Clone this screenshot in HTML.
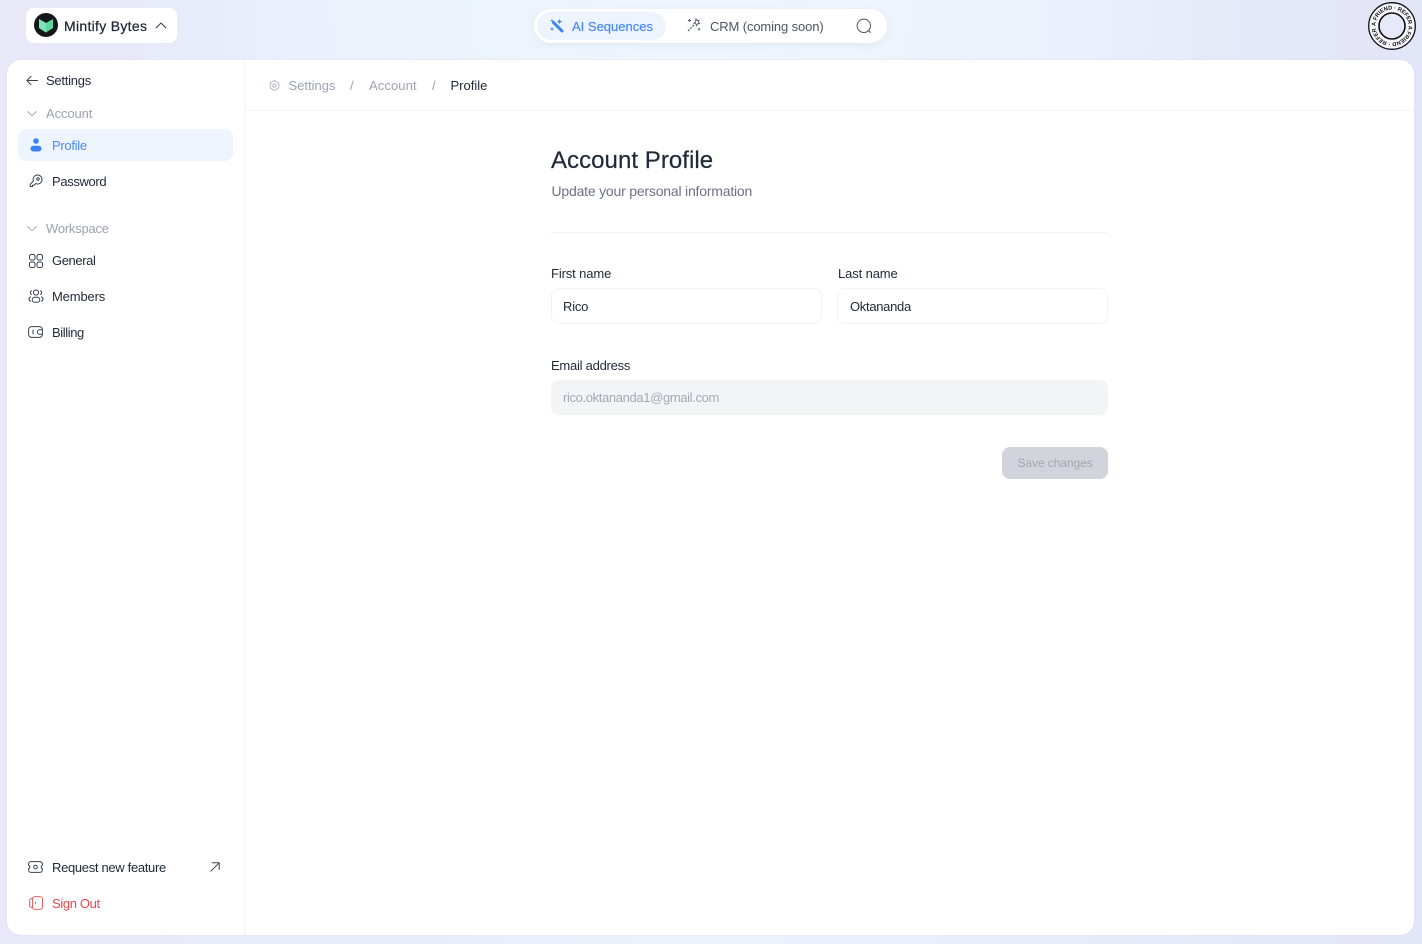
<!DOCTYPE html>
<html><head><meta charset="utf-8"><title>Account Profile</title>
<style>
html,body{margin:0;padding:0}
body{width:1422px;height:944px;position:relative;overflow:hidden;font-family:"Liberation Sans",sans-serif;color:#1f2937;
background:radial-gradient(ellipse 560px 500px at 690px 0,#eef5fd 0,rgba(238,245,253,.6) 60%,rgba(238,245,253,0) 100%),linear-gradient(90deg,#e8e8f9 0,#e7eefa 30%,#edf3fc 50%,#e6ecfa 75%,#e3e5f8 100%)}
.t{position:absolute;white-space:nowrap;font-size:13px;line-height:16px;color:#1f2937}
.g{color:#9ca3af}
.b{position:absolute;box-sizing:border-box}
svg{position:absolute;overflow:visible}
.s{fill:none;stroke:#374151;stroke-width:1;stroke-linecap:round;stroke-linejoin:round}
</style></head><body>

<!-- workspace chip -->
<div class="b" style="left:26px;top:8px;width:151px;height:35px;background:#fff;border-radius:8px"></div>
<svg style="left:34px;top:13px" width="24" height="24" viewBox="0 0 24 24"><circle cx="12" cy="12" r="12" fill="#14181a"/><path d="M5 6l7 4 7-4v9l-7 4.500L5 15z" fill="#5fd6a0"/><path d="M12 10v9.500L5 15V6z" fill="#7ce3b4"/></svg>
<div class="t" style="left:64px;top:18px;font-size:14px;letter-spacing:.3px;-webkit-text-stroke:.25px #1f2937">Mintify Bytes</div>
<svg style="left:155px;top:22px" width="12" height="7" viewBox="0 0 12 7"><path class="s" d="M1 6L6 1l5 5"/></svg>

<!-- top nav -->
<div class="b" style="left:534px;top:9px;width:353px;height:34px;background:#fff;border-radius:17px;box-shadow:0 2px 8px rgba(120,140,190,.10)"></div>
<div class="b" style="left:537px;top:12px;width:129px;height:28px;background:#edf4fe;border-radius:14px"></div>
<svg style="left:549px;top:18px" width="16" height="16" viewBox="0 0 16 16"><path d="M4.500 4.500L13 13" stroke="#3b82f6" stroke-width="3" stroke-linecap="round"/><path d="M10.500 .8l.8 2 2 .8-2 .8-.8 2-.8-2-2-.8 2-.8zM3 9l.6 1.400 1.400.6-1.400.6L3 13l-.6-1.400L1 11l1.400-.6zM3 .8l.5 1.200 1.200.5-1.200.5L3 4.200 2.500 3l-1.200-.5L2.500 2z" fill="#3b82f6"/></svg>
<div class="t" style="left:572px;top:19px;color:#4b8bf5;-webkit-text-stroke:.2px #4b8bf5">AI Sequences</div>
<svg style="left:687px;top:18px" width="14" height="14" viewBox="0 0 14 14"><path d="M1 13L7 7" stroke="#4b5563" stroke-width="1.200" stroke-dasharray="2 1.200"/><path d="M9 1l1 1.500 2-.2-.6 1.800 1.200 1.500-2 .2-1 1.700-.8-1.800-1.900-.5 1.500-1.200z" fill="none" stroke="#4b5563" stroke-width=".9"/><path d="M2.500 1v3M1 2.500h3M12 10v2.500M10.800 11.200h2.400" stroke="#4b5563" stroke-width=".9"/></svg>
<div class="t" style="left:710px;top:19px;color:#4b5563;letter-spacing:-.12px">CRM (coming soon)</div>
<svg style="left:856px;top:18px" width="16" height="16" viewBox="0 0 16 16"><circle cx="7.800" cy="7.800" r="6.700" class="s" style="stroke:#4b5563"/><path class="s" style="stroke:#4b5563" d="M12.500 12.500l2 2"/></svg>

<!-- refer badge -->
<svg style="left:1368px;top:2px" width="48" height="48" viewBox="0 0 48 48">
<circle cx="24" cy="24" r="23.300" fill="#f6f6fc" stroke="#111" stroke-width="1.300"/>
<circle cx="24" cy="24" r="13" fill="#e6e9fa" stroke="#111" stroke-width="1.600"/>
<defs><path id="c" d="M24 24m-16.500 0a16.500 16.500 0 1 1 33 0a16.500 16.500 0 1 1-33 0"/></defs>
<text font-family="Liberation Sans,sans-serif" font-size="5.600" font-weight="700" fill="#111" textLength="101" lengthAdjust="spacing"><textPath href="#c" textLength="101" lengthAdjust="spacing">A FRIEND · REFER A FRIEND · REFER </textPath></text>
</svg>

<!-- main card -->
<div class="b" style="left:7px;top:60px;width:1407px;height:875px;background:#fff;border-radius:14px;box-shadow:0 0 2px rgba(140,150,190,.12)"></div>
<div class="b" style="left:244px;top:60px;width:1px;height:875px;background:#f3f4f6"></div>
<div class="b" style="left:245px;top:110px;width:1169px;height:1px;background:#f3f4f6"></div>

<!-- sidebar -->
<svg style="left:26px;top:75px" width="12" height="11" viewBox="0 0 12 11"><path class="s" d="M11.500 5.500H.8M5 1.300L.8 5.500 5 9.700"/></svg>
<div class="t" style="left:46px;top:73px;letter-spacing:-.25px">Settings</div>
<svg style="left:27px;top:111px" width="10" height="5" viewBox="0 0 10 5"><path class="s" style="stroke:#a7adb8" d="M.5.500L5 4.800 9.500.500"/></svg>
<div class="t g" style="left:46px;top:106px;letter-spacing:-.1px">Account</div>
<div class="b" style="left:18px;top:129px;width:215px;height:32px;background:#edf4fe;border-radius:8px"></div>
<svg style="left:30px;top:138px" width="12" height="14" viewBox="0 0 12 14"><circle cx="6" cy="3" r="2.800" fill="#3b82f6"/><rect x=".5" y="7.700" width="11" height="5.800" rx="2.900" fill="#3b82f6"/></svg>
<div class="t" style="left:52px;top:138px;color:#4b8bf5;letter-spacing:-.3px">Profile</div>
<svg style="left:29px;top:174px" width="14" height="14" viewBox="0 0 14 14"><path class="s" d="M8.500 1a4.500 4.500 0 1 1-1.800 8.600L5 11.300H3.500v1.200H1.200v-2.200l3.200-3.200A4.500 4.500 0 0 1 8.500 1z"/><circle class="s" cx="9" cy="5" r="1.200"/></svg>
<div class="t" style="left:52px;top:174px;letter-spacing:-.35px">Password</div>

<svg style="left:27px;top:226px" width="10" height="5" viewBox="0 0 10 5"><path class="s" style="stroke:#a7adb8" d="M.5.500L5 4.800 9.500.500"/></svg>
<div class="t g" style="left:46px;top:221px;letter-spacing:-.22px">Workspace</div>
<svg style="left:29px;top:254px" width="14" height="14" viewBox="0 0 14 14"><rect class="s" x=".5" y=".5" width="5.500" height="5.500" rx="1.800"/><rect class="s" x="8" y=".5" width="5.500" height="5.500" rx="1.800"/><rect class="s" x=".5" y="8" width="5.500" height="5.500" rx="1.800"/><rect class="s" x="8" y="8" width="5.500" height="5.500" rx="1.800"/></svg>
<div class="t" style="left:52px;top:253px;letter-spacing:-.4px">General</div>
<svg style="left:28px;top:289px" width="16" height="14" viewBox="0 0 16 14"><circle class="s" cx="8" cy="3.500" r="2.600"/><rect class="s" x="4.200" y="8.300" width="7.600" height="5" rx="2.500"/><path class="s" d="M3.500 1.800a2 2 0 0 0 0 3.600M12.500 1.800a2 2 0 0 1 0 3.600M2.500 8a2.300 2.300 0 0 0 0 4.300M13.500 8a2.300 2.300 0 0 1 0 4.300"/></svg>
<div class="t" style="left:52px;top:289px;letter-spacing:-.15px">Members</div>
<svg style="left:28px;top:326px" width="15" height="12" viewBox="0 0 15 12"><rect class="s" x=".6" y=".6" width="13.800" height="10.800" rx="3"/><path class="s" d="M5 4v4M14 3.800h-2.500a2.200 2.200 0 0 0 0 4.400H14"/></svg>
<div class="t" style="left:52px;top:325px;letter-spacing:-.4px">Billing</div>

<svg style="left:28px;top:861px" width="15" height="12" viewBox="0 0 15 12"><path class="s" d="M3 .6h9a2.400 2.400 0 0 1 2.400 2.400v1.300a1.800 1.800 0 0 0 0 3.400V9a2.400 2.400 0 0 1-2.400 2.400H3A2.400 2.400 0 0 1 .6 9V7.700a1.800 1.800 0 0 0 0-3.400V3A2.400 2.400 0 0 1 3 .6z"/><circle class="s" cx="7.500" cy="6" r="1.800"/></svg>
<div class="t" style="left:52px;top:860px;letter-spacing:-.32px">Request new feature</div>
<svg style="left:210px;top:862px" width="10" height="10" viewBox="0 0 10 10"><path class="s" d="M.8 9.200L9.200.8M2.500.8h6.700v6.700"/></svg>
<svg style="left:29px;top:896px" width="14" height="14" viewBox="0 0 14 14"><rect x="3.500" y=".6" width="10" height="12.800" rx="2.500" fill="none" stroke="#e5605f" stroke-width="1"/><path d="M3.500 2.200L1.800 2.800A1.500 1.500 0 0 0 .7 4.200v5.600a1.500 1.500 0 0 0 1.100 1.400l1.700.6M6.500 6.300v1.400" fill="none" stroke="#e5605f" stroke-width="1" stroke-linecap="round"/></svg>
<div class="t" style="left:52px;top:896px;color:#e5484d;letter-spacing:-.35px">Sign Out</div>

<!-- breadcrumb -->
<svg style="left:269px;top:80px" width="11" height="11" viewBox="0 0 11 11"><path class="s" style="stroke:#a7adb8;stroke-width:.9" d="M5.500.5l4.300 2.500v5L5.500 10.500 1.200 8V3z"/><circle class="s" style="stroke:#a7adb8;stroke-width:.9" cx="5.500" cy="5.500" r="1.600"/></svg>
<div class="t g" style="left:288.500px;top:78px">Settings</div>
<div class="t g" style="left:350px;top:78px">/</div>
<div class="t g" style="left:369px;top:78px;letter-spacing:.1px">Account</div>
<div class="t g" style="left:432px;top:78px">/</div>
<div class="t" style="left:450.500px;top:78px">Profile</div>

<!-- content -->
<div class="t" style="left:551px;top:147px;font-size:24px;line-height:28px;letter-spacing:.05px;-webkit-text-stroke:.2px #1f2937">Account Profile</div>
<div class="t" style="left:551.500px;top:183px;font-size:14px;color:#6b7280;letter-spacing:-.2px">Update your personal information</div>
<div class="b" style="left:551px;top:232px;width:557px;height:1px;background:#f3f4f6"></div>

<div class="t" style="left:551px;top:266px;letter-spacing:-.12px">First name</div>
<div class="b" style="left:551px;top:288px;width:271px;height:36px;border:1px solid #f1f2f4;border-radius:8px"></div>
<div class="t" style="left:563px;top:299px;letter-spacing:-.2px">Rico</div>
<div class="t" style="left:838px;top:266px;letter-spacing:-.12px">Last name</div>
<div class="b" style="left:837px;top:288px;width:271px;height:36px;border:1px solid #f1f2f4;border-radius:8px"></div>
<div class="t" style="left:850px;top:299px;letter-spacing:-.3px">Oktananda</div>

<div class="t" style="left:551px;top:358px;letter-spacing:-.25px">Email address</div>
<div class="b" style="left:551px;top:380px;width:557px;height:35px;background:#f3f4f6;border-radius:8px"></div>
<div class="t" style="left:563px;top:390px;color:#a3a9b4;letter-spacing:-.36px">rico.oktananda1@gmail.com</div>

<div class="b" style="left:1002px;top:447px;width:106px;height:32px;background:#d1d5db;border-radius:8px"></div>
<div class="t" style="left:1017.500px;top:455px;font-size:12px;color:#a0a6b2;letter-spacing:-.08px">Save changes</div>
</body></html>
